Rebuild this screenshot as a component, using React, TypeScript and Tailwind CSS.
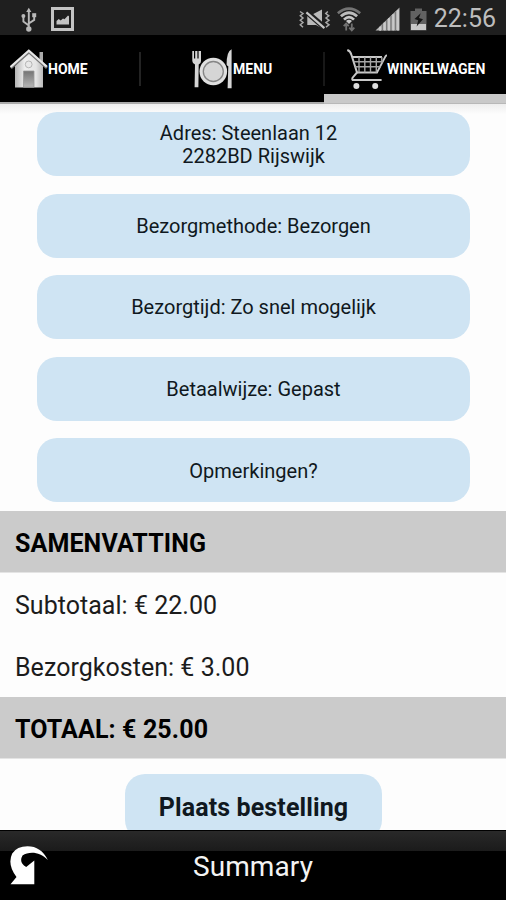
import type { ReactNode } from 'react'

const options = [
  ['Adres: Steenlaan 12\u00a0\u00a0', '2282BD Rijswijk'],
  ['Bezorgmethode: Bezorgen'],
  ['Bezorgtijd: Zo snel mogelijk'],
  ['Betaalwijze: Gepast'],
  ['Opmerkingen?'],
]

const summary = [
  { text: 'SAMENVATTING', bold: true },
  { text: 'Subtotaal: € 22.00', bold: false },
  { text: 'Bezorgkosten: € 3.00', bold: false },
  { text: 'TOTAAL: € 25.00', bold: true },
]

function UsbIcon() {
  return (
    <svg className="w-4 h-[25px] shrink-0" viewBox="0 0 16 25" fill="none" stroke="#b8b8b8" strokeWidth="1.9">
      <path d="M7.8 4v17M7.8 18.5L2.4 14.5V9.5M7.8 16.5l5.4-3.6V8.5" />
      <path d="M7.8 0.8L10.4 5H5.2z" fill="#b8b8b8" stroke="none" />
      <circle cx="7.8" cy="22" r="2.7" fill="#b8b8b8" stroke="none" />
      <circle cx="2.4" cy="9" r="2" fill="#b8b8b8" stroke="none" />
      <path d="M11.2 6.2h4v4h-4z" fill="#b8b8b8" stroke="none" />
    </svg>
  )
}

function PictureIcon() {
  return (
    <svg className="w-[23px] h-6 shrink-0" viewBox="0 0 23 24">
      <path d="M1.5 1.5h20v21h-20z" fill="none" stroke="#c4c4c4" strokeWidth="3" />
      <path d="M5.5 17.5v-3.5l2.2-2 2 1.5 2.3-2 1.5.7 3.5-3.7 1 .8v8.2z" fill="#c4c4c4" />
    </svg>
  )
}

function MuteIcon() {
  return (
    <svg className="w-[33px] h-[21px] shrink-0" viewBox="0 0 33 21">
      <path d="M8.3 5.2h5.5L23 0.5v18.8l-6-3.3H8.3z" fill="#b9b9b9" />
      <path d="M9.5 2.3L27 17.6" stroke="#1f1f1f" strokeWidth="2" />
      <path d="M7.2 3.4L25.2 19.2" stroke="#1f1f1f" strokeWidth="4.4" />
      <path d="M7.4 3.4L25.4 19.2" stroke="#c4c4c4" strokeWidth="2.2" />
      <path
        d="M1 2.5l3 2-2.7 2.3L4 9l-2.7 2.3L4 13.5l-2.7 2.3L4 18.2M28.8 2.5l-2 2 3 2.3L27 9l3 2.3-3 2.2 3 2.3-3 2.4"
        fill="none"
        stroke="#a9a9a9"
        strokeWidth="1.5"
      />
    </svg>
  )
}

function WifiIcon() {
  return (
    <svg className="w-6 h-[25px] shrink-0" viewBox="0 0 24 25" fill="none">
      <path d="M0.8 6.3Q12 -3 23.2 6.3" stroke="#747474" strokeWidth="2.7" />
      <path d="M3.9 9.3Q12 2.3 20.1 9.3" stroke="#bdbdbd" strokeWidth="2.8" />
      <path d="M7 12.6Q12 7.6 17 12.6" stroke="#c8c8c8" strokeWidth="2.7" />
      <path d="M9 14Q12 11.4 15 14L12 17z" fill="#c8c8c8" />
      <path d="M9.2 23.5v-6.7M6.7 19.2l2.5-2.7 2.5 2.7M14.8 16.5v6.7M12.3 20.7l2.5 2.7 2.5-2.7" stroke="#727272" strokeWidth="1.8" />
    </svg>
  )
}

function SignalIcon() {
  return (
    <svg className="w-[25px] h-6 shrink-0" viewBox="0 0 25 24">
      <path d="M0.5 23.5L24.5 0.5v23z" fill="#b2b2b2" />
      <path d="M7.3 17v7M11.7 13v11M16 9v15M20.3 5v19" stroke="#707070" strokeWidth="1.1" />
      <path d="M5.2 19.8v4M9.7 15.5v8M14 11.3v12.2M18.3 7.2v16.3M23 3v20.5" stroke="#c9c9c9" strokeWidth="2" />
    </svg>
  )
}

function BatteryIcon() {
  return (
    <svg className="w-[17px] h-[23px] shrink-0" viewBox="0 0 17 23">
      <path d="M5 0.5h7V3h4.5v19.5H0.5V3H5z" fill="#626262" />
      <path d="M1 16h15v6H1z" fill="#c8c8c8" />
      <path d="M10.7 5.2L4.5 11l3.7 1.2-1.6 6.2L13 11.3l-4-1.2z" fill="#151515" />
    </svg>
  )
}

function HomeIcon() {
  return (
    <svg className="w-[38px] h-[39px] shrink-0" viewBox="0 0 38 39">
      <defs>
        <linearGradient id="wall" x1="0" y1="0" x2="1" y2="0">
          <stop offset="0" stopColor="#b4b4b4" />
          <stop offset="0.35" stopColor="#eeeeee" />
          <stop offset="0.75" stopColor="#e4e4e4" />
          <stop offset="1" stopColor="#bababa" />
        </linearGradient>
        <linearGradient id="door" x1="0" y1="0" x2="0" y2="1">
          <stop offset="0" stopColor="#747474" />
          <stop offset="1" stopColor="#b6b6b6" />
        </linearGradient>
      </defs>
      <path d="M29.5 3h3.5v11l-3.5-3z" fill="#aaa" />
      <path d="M5 17L19 3.5 33 17v21.5H5z" fill="url(#wall)" />
      <path d="M0.8 19L19 2.8l18 16" fill="none" stroke="#777" strokeWidth="3" />
      <path d="M0.5 18L18.8 1.6l18 16" fill="none" stroke="#e6e6e6" strokeWidth="2.2" />
      <circle cx="18.7" cy="15.4" r="3.4" fill="#e8e8e8" stroke="#b5b5b5" />
      <path d="M13.5 22h10.5v16.2H13.5z" fill="url(#door)" stroke="#999" strokeWidth="0.8" />
    </svg>
  )
}

function MenuIcon() {
  return (
    <svg className="w-[41px] h-10 shrink-0" viewBox="0 0 41 40">
      <path d="M0.3 2h1.7V9.5h1.2V2h2.2V9.5h1.2V2h2.4V12q0 3-2.3 3.5L6.4 38.3H2.6L3 15.5Q0.6 15 0.3 12z" fill="#d5d5d5" />
      <circle cx="21.3" cy="22.5" r="13.8" fill="#dfdfdf" />
      <circle cx="21.3" cy="22.5" r="10" fill="#d5d5d5" stroke="#858585" strokeWidth="1.3" />
      <path d="M39.6 0.3q-5 2-5 15.2 0 1.3 1.7 1.8L35.6 39.2h4z" fill="#d6d6d6" />
    </svg>
  )
}

function CartIcon() {
  return (
    <svg className="w-10 h-[41px] shrink-0" viewBox="0 0 40 41" fill="none" stroke="#c8c8c8">
      <path d="M0.3 1q3.2 1.2 4.2 5l5.5 17.5-4.4 5.2q-1 2.4 1 2.4h28" strokeWidth="2" />
      <path d="M5.3 8H35M10 23.5h20L38.5 7.3q.6-.9 1.5-.8" strokeWidth="1.8" />
      <path d="M6.8 12.7h29M8.2 17.8h25.5M12 8v15.5M17.8 8v15.5M23.5 8v15.5M29.3 8v15.5M34.8 8v6" strokeWidth="1.4" stroke="#a5a5a5" />
      <circle cx="9.4" cy="37" r="3" fill="#ddd" stroke="none" />
      <circle cx="28.2" cy="37" r="3" fill="#ddd" stroke="none" />
    </svg>
  )
}

function BackIcon() {
  return (
    <svg className="w-[39px] h-[39px] shrink-0" viewBox="0 0 39 39">
      <path d="M37.8 14Q31 0.3 17.5 0.3 7 0.3 2.2 7.5-3 18.5 6.5 31L.5 38.2h23.8V14.5L16.2 21Q8.5 16.5 12.5 9.5C19 5 30 5.5 37.8 14z" fill="#fff" />
    </svg>
  )
}

function Tab({ icon, label, className }: { icon: ReactNode; label: string; className: string }) {
  return (
    <button className={`flex items-start pt-[14px] font-bold text-white ${className}`}>
      {icon}
      <span className="pt-3 text-[14px] leading-4 whitespace-nowrap">{label}</span>
    </button>
  )
}

export default function App() {
  return (
    <div className="w-[506px] h-[900px] flex flex-col overflow-hidden bg-[#fdfdfd] font-['Roboto',sans-serif] text-[#101820]">
      {/* status bar */}
      <div className="h-[35px] shrink-0 flex items-center bg-[#1f1f1f] pl-[21px] pr-[10px] pt-[3px]">
        <UsbIcon />
        <div className="ml-[14px]"><PictureIcon /></div>
        <div className="ml-auto"><MuteIcon /></div>
        <div className="ml-[5px]"><WifiIcon /></div>
        <div className="ml-[14px]"><SignalIcon /></div>
        <div className="ml-[10px]"><BatteryIcon /></div>
        <span className="ml-[7px] text-[25px] leading-7 text-[#bdbdbd]">22:56</span>
      </div>

      {/* tabs */}
      <nav className="h-[69px] shrink-0 flex bg-black">
        <div className="w-[324px] flex border-b-2 border-[#aaa]">
          <Tab icon={<HomeIcon />} label="HOME" className="w-[139px] pl-[10px]" />
          <span className="mt-[17px] h-[34px] w-[2px] bg-[#232323]" />
          <Tab icon={<MenuIcon />} label="MENU" className="w-[182px] pl-[51px]" />
        </div>
        <div className="flex-1 flex flex-col">
          <div className="flex h-[59px]">
            <span className="-ml-px mt-[17px] h-[34px] w-[2px] bg-[#181818]" />
            <Tab icon={<CartIcon />} label="WINKELWAGEN" className="pl-[22px]" />
          </div>
          <div className="h-[10px] shrink-0 bg-[#c9c9c9] border-b border-[#b8b8b8]" />
        </div>
      </nav>

      {/* order details */}
      <main className="flex-1 min-h-0 overflow-hidden flex flex-col">
        <div className="shrink-0 h-[407px] pt-2 px-[37px] pr-[36px] flex flex-col gap-[17.6px] bg-linear-to-b from-[#eeeeee] to-[#fdfdfd] to-[10px]">
          {options.map((lines) => (
            <button key={lines[0]} className="h-16 shrink-0 rounded-[20px] bg-[#cfe4f3] pt-[2px] text-[20px] leading-[23.5px]">
              {lines.map((line) => (
                <span key={line} className="block">{line}</span>
              ))}
            </button>
          ))}
        </div>
        {summary.map((row) => (
          <div
            key={row.text}
            className={`h-[62px] shrink-0 flex items-center pl-[15px] pt-1 text-[25px] ${row.bold ? 'bg-[#cbcbcb] font-bold text-black tracking-[0.12px] border-b border-[#e4e4e4]' : 'text-[#1c1c1c] tracking-[0.03px]'}`}
          >
            {row.text}
          </div>
        ))}
        <button className="shrink-0 mt-[15px] ml-[125px] w-[257px] h-[66px] pt-[2px] rounded-[20px] bg-[#cfe4f3] text-[25px] font-bold tracking-[0.12px]">
          Plaats bestelling
        </button>
      </main>

      {/* bottom bar */}
      <footer className="h-[70px] shrink-0 flex border-t border-black bg-linear-to-b from-[#292929] from-0% to-[#1b1b1b] to-[20px]">
        <div className="mt-5 flex-1 bg-black relative">
          <div className="absolute left-[10px] -top-[5px]"><BackIcon /></div>
          <h1 className="text-center text-[28px] leading-[32px] tracking-[0.1px] text-[#f3f3f3]">Summary</h1>
        </div>
      </footer>
    </div>
  )
}
